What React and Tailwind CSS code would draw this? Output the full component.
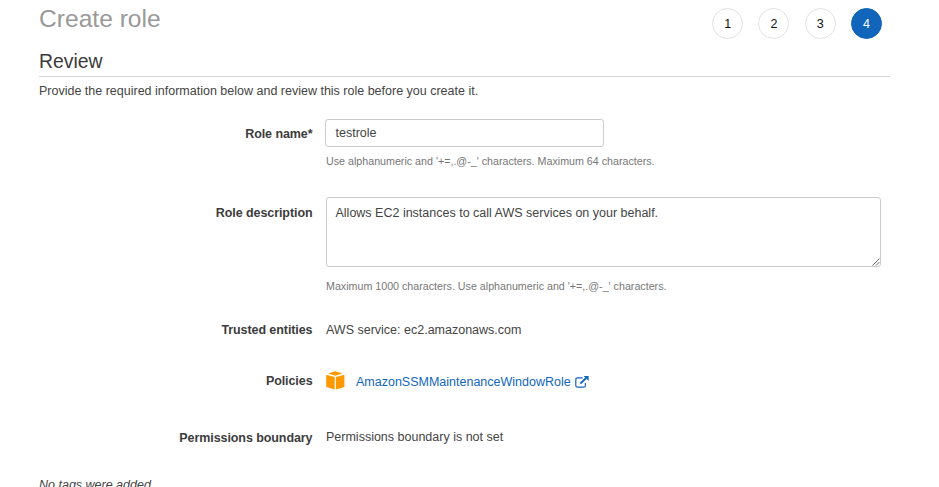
const steps = [1, 2, 3, 4];

function Row({ label, className, children }) {
  return (
    <div className={`flex items-start ${className}`}>
      <div className="w-[273.5px] shrink-0 text-right text-[12.5px] leading-4 font-bold tracking-[-0.08px] whitespace-nowrap text-[#3c3c3c]">
        {label}
      </div>
      <div className="ml-[13.5px] flex-1">{children}</div>
    </div>
  );
}

function BoxIcon() {
  return (
    <svg className="block h-[19px] w-[19px] shrink-0" viewBox="0 0 19 19" fill="#ff9900">
      <path d="M9.3 0.3 16.4 2.5 9.3 4.7 2.2 2.5Z" />
      <path d="M0.2 3.7 8.7 6.1V18.5L0.2 15.9Z" />
      <path d="M18.4 3.7 9.9 6.1V18.5L18.4 15.9Z" />
    </svg>
  );
}

function ExternalIcon() {
  return (
    <svg className="ml-[4.5px] block h-[12px] w-[14px] shrink-0" viewBox="0 0 14 12" fill="none" stroke="#1166bb">
      <path d="M7.6 1.8H2.6Q0.8 1.8 0.8 3.6V9.4Q0.8 11.2 2.6 11.2H8.6Q10.4 11.2 10.4 9.4V6.9" strokeWidth="1.2" />
      <path d="M5.3 7.6 11.2 2" strokeWidth="1.9" />
      <path d="M8.6 0H13.6V5Z" fill="#1166bb" stroke="none" />
    </svg>
  );
}

export default function App() {
  return (
    <div className="h-[487px] w-[939px] overflow-hidden bg-white pr-[49px] pl-[39px] font-['Liberation_Sans',Arial,sans-serif] text-[12.5px] leading-4 text-[#444]">
      <header className="flex h-[47px] items-start justify-between">
        <h1 className="pt-[5px] text-[24.6px] leading-7 text-[#999]">Create role</h1>
        <ol className="mr-[8px] flex gap-[15.3px] pt-[8px]">
          {steps.map((n) => (
            <li
              key={n}
              className={`flex h-[31px] w-[31px] items-center justify-center rounded-full border pt-px text-[12.5px] ${
                n === 4 ? "border-[#1166bb] bg-[#1166bb] text-white" : "border-[#e2e2e2] text-[#111]"
              }`}
            >
              {n}
            </li>
          ))}
        </ol>
      </header>
      <h2 className="h-[30px] border-b border-[#d5d5d5] pt-[2px] text-[19.4px] leading-6 text-[#3a3a3a]">Review</h2>
      <p className="pt-[6px]">Provide the required information below and review this role before you create it.</p>

      <Row label={<div className="pt-[7px]">Role name*</div>} className="mt-[20px] h-[78px]">
        <div className="-ml-px flex h-[28px] w-[279px] items-center rounded-[3px] border border-[#ccc] pl-[9.5px]">
          testrole
        </div>
        <div className="pt-[6px] text-[10.7px] leading-4 text-[#777]">
          Use alphanumeric and '+=,.@-_' characters. Maximum 64 characters.
        </div>
      </Row>

      <Row label={<div className="pt-[8px]">Role description</div>} className="h-[125px]">
        <div className="relative h-[70px] w-[554.5px] rounded-[3px] border border-[#ccc] pt-[7px] pl-[8.5px]">
          Allows EC2 instances to call AWS services on your behalf.
          <svg className="absolute right-0 bottom-0 h-[8px] w-[8px]" viewBox="0 0 8 8" stroke="#666" strokeWidth="1">
            <path d="M0.5 7.5 7.5 0.5M4 7.5 7.5 4" />
          </svg>
        </div>
        <div className="pt-[11px] text-[10.7px] leading-4 text-[#777]">
          Maximum 1000 characters. Use alphanumeric and '+=,.@-_' characters.
        </div>
      </Row>

      <Row label="Trusted entities" className="h-[49px]">
        AWS service: ec2.amazonaws.com
      </Row>

      <Row label={<div className="pt-[2px]">Policies</div>} className="h-[58px]">
        <div className="-mt-px flex items-center">
          <BoxIcon />
          <a className="mt-[4px] ml-[11px] flex items-center text-[#1166bb]">
            AmazonSSMMaintenanceWindowRole
            <ExternalIcon />
          </a>
        </div>
      </Row>

      <Row label={<div className="pt-px">Permissions boundary</div>} className="h-[48px]">
        Permissions boundary is not set
      </Row>

      <p className="italic">No tags were added.</p>
    </div>
  );
}
